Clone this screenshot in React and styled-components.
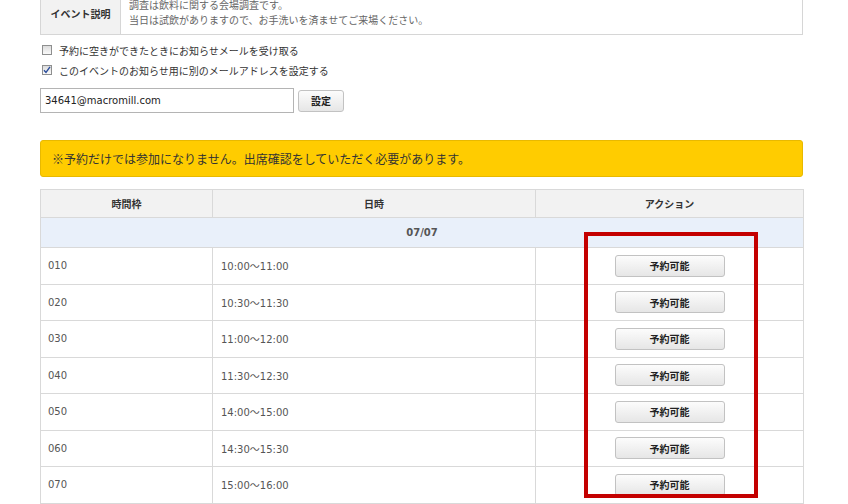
import React from "react";
import styled, { createGlobalStyle } from "styled-components";

const Global = createGlobalStyle`
  html, body { margin: 0; padding: 0; background: #fff; }
  body { font-family: "DejaVu Sans", "Noto Sans CJK JP", sans-serif; color: #333; }
`;

const Page = styled.div`
  width: 763px;
  margin: -9px 0 0 40px;
  font-size: 10px;
`;

const InfoTable = styled.table`
  width: 100%;
  border-collapse: collapse;
  border: 1px solid #d6d6d6;
`;

const InfoHead = styled.th`
  width: 79px;
  background: #f2f2f2;
  border-right: 1px solid #d6d6d6;
  font-weight: bold;
  font-size: 10px;
  color: #333;
  height: 42px;
  padding: 0;
  font-family: "Noto Sans CJK JP", sans-serif;
`;

const InfoBody = styled.td`
  padding: 3px 8px 5px;
  line-height: 15px;
  color: #666;
  font-family: "Noto Sans CJK JP", sans-serif;
  font-size: 10px;
  vertical-align: middle;
`;

const Options = styled.div`
  margin-top: 5px;
  display: flex;
  flex-direction: column;
`;

const OptionRow = styled.label`
  display: flex;
  align-items: center;
  height: 20px;
  padding-left: 2px;
  gap: 7px;
  font-family: "Noto Sans CJK JP", sans-serif;
  font-size: 10px;
  color: #333;
`;

const Box = styled.span`
  width: 8px;
  height: 8px;
  border: 1px solid #8e8f8f;
  background: linear-gradient(#dcdcdc, #fafafa);
  display: flex;
  align-items: center;
  justify-content: center;
`;

const EmailRow = styled.div`
  margin-top: 8px;
  display: flex;
  align-items: center;
  gap: 4px;
`;

const EmailInput = styled.div`
  width: 248px;
  height: 23px;
  border: 1px solid #b4b4b4;
  display: flex;
  align-items: center;
  padding-left: 4px;
  font-size: 10px;
  color: #222;
`;

const SmallButton = styled.button`
  width: ${(p) => p.$w}px;
  height: 22px;
  border: 1px solid #c2c2c2;
  border-radius: 3px;
  background: linear-gradient(#fcfcfc, #e6e6e6);
  font-family: "Noto Sans CJK JP", sans-serif;
  font-size: 10px;
  font-weight: bold;
  color: #222;
  padding: 0;
  display: flex;
  align-items: center;
  justify-content: center;
`;

const Notice = styled.div`
  margin-top: 27px;
  height: 37px;
  box-sizing: border-box;
  background: #ffcc00;
  border: 1px solid #e8b900;
  border-radius: 3px;
  display: flex;
  align-items: center;
  padding-left: 11px;
  font-family: "Noto Sans CJK JP", sans-serif;
  font-size: 12px;
  color: #333;
`;

const TableWrap = styled.div`
  position: relative;
  margin-top: 12px;
`;

const Slots = styled.table`
  width: 100%;
  border-collapse: collapse;
  table-layout: fixed;
`;

const HeadCell = styled.th`
  background: #f2f2f2;
  border: 1px solid #d9d9d9;
  height: 27px;
  padding: 0;
  font-family: "Noto Sans CJK JP", sans-serif;
  font-size: 10px;
  font-weight: bold;
  color: #333;
`;

const DateCell = styled.td`
  background: #e9f0fa;
  border: 1px solid #d9d9d9;
  height: 29px;
  text-align: center;
  font-weight: bold;
  font-size: 10px;
  color: #555;
  padding: 0;
`;

const Cell = styled.td`
  border: 1px solid #d9d9d9;
  height: 35.5px;
  padding: 0 0 0 ${(p) => p.$pad}px;
  font-size: 10px;
  color: #555;
  vertical-align: middle;
`;

const ActionCell = styled.td`
  border: 1px solid #d9d9d9;
  height: 35.5px;
  padding: 0;
  vertical-align: middle;
  & > button { margin: 0 auto; }
`;

const Highlight = styled.div`
  position: absolute;
  left: 544px;
  top: 43px;
  width: 166px;
  height: 258px;
  border: 4px solid #c40000;
  pointer-events: none;
`;

const slots = [
  ["010", "10:00～11:00"],
  ["020", "10:30～11:30"],
  ["030", "11:00～12:00"],
  ["040", "11:30～12:30"],
  ["050", "14:00～15:00"],
  ["060", "14:30～15:30"],
  ["070", "15:00～16:00"],
];

export default function App() {
  return (
    <Page>
      <Global />
      <InfoTable>
        <tbody>
          <tr>
            <InfoHead>イベント説明</InfoHead>
            <InfoBody>
              調査は飲料に関する会場調査です。
              <br />
              当日は試飲がありますので、お手洗いを済ませてご来場ください。
            </InfoBody>
          </tr>
        </tbody>
      </InfoTable>

      <Options>
        <OptionRow>
          <Box />
          予約に空きができたときにお知らせメールを受け取る
        </OptionRow>
        <OptionRow>
          <Box>
            <svg width="8" height="8" viewBox="0 0 8 8">
              <path d="M1 4.2 L3 6.4 L7 0.8" fill="none" stroke="#2a4d9b" strokeWidth="1.4" />
            </svg>
          </Box>
          このイベントのお知らせ用に別のメールアドレスを設定する
        </OptionRow>
      </Options>

      <EmailRow>
        <EmailInput>34641@macromill.com</EmailInput>
        <SmallButton $w={46}>設定</SmallButton>
      </EmailRow>

      <Notice>※予約だけでは参加になりません。出席確認をしていただく必要があります。</Notice>

      <TableWrap>
        <Slots>
          <colgroup>
            <col style={{ width: "172px" }} />
            <col style={{ width: "323px" }} />
            <col style={{ width: "268px" }} />
          </colgroup>
          <thead>
            <tr>
              <HeadCell>時間枠</HeadCell>
              <HeadCell>日時</HeadCell>
              <HeadCell>アクション</HeadCell>
            </tr>
          </thead>
          <tbody>
            <tr>
              <DateCell colSpan={3}>07/07</DateCell>
            </tr>
            {slots.map(([id, time]) => (
              <tr key={id}>
                <Cell $pad={7}>{id}</Cell>
                <Cell $pad={8}>{time}</Cell>
                <ActionCell>
                  <SmallButton $w={110}>予約可能</SmallButton>
                </ActionCell>
              </tr>
            ))}
          </tbody>
        </Slots>
        <Highlight />
      </TableWrap>
    </Page>
  );
}
